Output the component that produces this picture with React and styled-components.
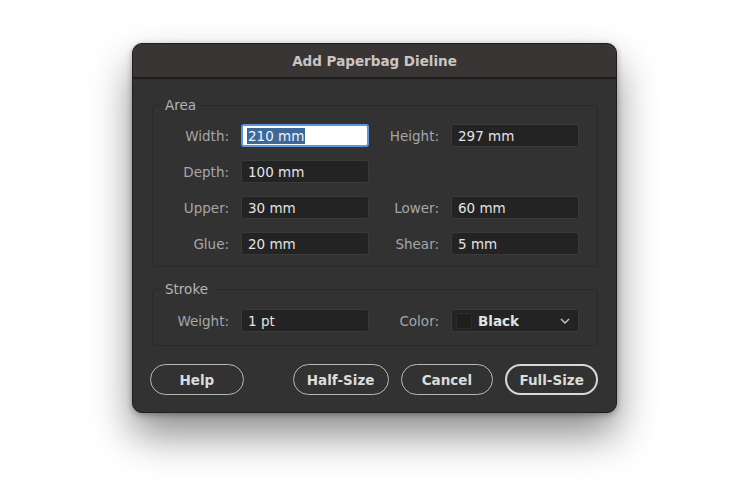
import React from 'react';
import styled, { createGlobalStyle } from 'styled-components';

const GlobalStyle = createGlobalStyle`
  html, body {
    margin: 0;
    padding: 0;
    background: #ffffff;
    font-family: 'DejaVu Sans', 'Liberation Sans', sans-serif;
  }
`;

const Page = styled.div`
  width: 750px;
  height: 500px;
  padding-top: 43px;
  box-sizing: border-box;
  display: flex;
  justify-content: center;
`;

const Dialog = styled.div`
  width: 485px;
  height: 370px;
  margin-left: -1px;
  box-sizing: border-box;
  background: #323232;
  border: 1px solid #1e1e1e;
  border-radius: 10px;
  overflow: hidden;
  display: flex;
  flex-direction: column;
  box-shadow: 0 22px 40px rgba(0, 0, 0, 0.45), 0 2px 6px rgba(0, 0, 0, 0.3);
`;

const TitleBar = styled.div`
  height: 33px;
  flex: none;
  background: #3a3535;
  border-bottom: 2px solid #1c1c1c;
  display: flex;
  align-items: center;
  justify-content: center;
  color: #c9c6c6;
  font-weight: bold;
  font-size: 13.5px;
`;

const Body = styled.div`
  flex: 1;
  padding: 18px 18px 0 19px;
  display: flex;
  flex-direction: column;
`;

const Group = styled.fieldset`
  margin: 0;
  border: 1px solid #2a2a2a;
  border-radius: 3px;
  padding: ${(p) => p.$pad};
  display: grid;
  grid-template-columns: 64px 128px 58px 128px;
  column-gap: 12px;
  row-gap: 13px;
  align-items: center;
  & + & {
    margin-top: 14px;
  }
`;

const Legend = styled.legend`
  margin-left: -4px;
  padding: 0 4px;
  color: #b4b4b4;
  font-size: 13.5px;
  line-height: 16px;
`;

const Label = styled.div`
  text-align: right;
  color: #a6a6a6;
  font-size: 13.5px;
  white-space: nowrap;
`;

const Field = styled.div`
  height: 23px;
  box-sizing: border-box;
  background: #232323;
  border: 1px solid #3a3a3a;
  border-radius: 3px;
  display: flex;
  align-items: center;
  padding-left: 6px;
  color: #e2e2e2;
  font-size: 13.5px;
`;

const FocusField = styled(Field)`
  background: #ffffff;
  border: 2px solid #5b95dc;
  padding-left: 4px;
`;

const Selected = styled.span`
  background: #3f6797;
  color: #eef2f7;
  padding: 0 1px;
`;

const Select = styled(Field)`
  padding-left: 4px;
  padding-right: 8px;
  gap: 6px;
  font-weight: bold;
`;

const Swatch = styled.span`
  width: 14px;
  height: 14px;
  background: #231e1e;
  border: 1px solid #2e2a2a;
  flex: none;
`;

const SelectText = styled.span`
  flex: 1;
`;

const Buttons = styled.div`
  display: flex;
  align-items: center;
  margin-top: 18px;
  margin-left: -2px;
  gap: 12px;
`;

const Button = styled.button`
  width: ${(p) => p.$w}px;
  height: 31px;
  box-sizing: border-box;
  border-radius: 16px;
  background: transparent;
  border: ${(p) => (p.$primary ? '2px solid #d8d8d8' : '1.5px solid #b8b8b8')};
  color: #dcdcdc;
  font-family: inherit;
  font-weight: bold;
  font-size: 13.5px;
  padding: 0;
  &:first-child {
    margin-right: 37px;
  }
`;

const Chevron = () => (
  <svg width="10" height="6" viewBox="0 0 10 6">
    <path d="M1 1 L5 5 L9 1" fill="none" stroke="#c8c8c8" strokeWidth="1.4" />
  </svg>
);

export default function App() {
  return (
    <>
      <GlobalStyle />
      <Page>
        <Dialog>
          <TitleBar>Add Paperbag Dieline</TitleBar>
          <Body>
            <Group $pad="11px 18px 11px 12px">
              <Legend>Area</Legend>
              <Label>Width:</Label>
              <FocusField>
                <Selected>210 mm</Selected>
              </FocusField>
              <Label>Height:</Label>
              <Field>297 mm</Field>

              <Label>Depth:</Label>
              <Field>100 mm</Field>
              <div />
              <div />

              <Label>Upper:</Label>
              <Field>30 mm</Field>
              <Label>Lower:</Label>
              <Field>60 mm</Field>

              <Label>Glue:</Label>
              <Field>20 mm</Field>
              <Label>Shear:</Label>
              <Field>5 mm</Field>
            </Group>
            <Group $pad="12px 18px 13px 12px">
              <Legend>Stroke</Legend>
              <Label>Weight:</Label>
              <Field>1 pt</Field>
              <Label>Color:</Label>
              <Select>
                <Swatch />
                <SelectText>Black</SelectText>
                <Chevron />
              </Select>
            </Group>
            <Buttons>
              <Button $w={94}>Help</Button>
              <Button $w={96}>Half-Size</Button>
              <Button $w={93}>Cancel</Button>
              <Button $w={93} $primary>
                Full-Size
              </Button>
            </Buttons>
          </Body>
        </Dialog>
      </Page>
    </>
  );
}
